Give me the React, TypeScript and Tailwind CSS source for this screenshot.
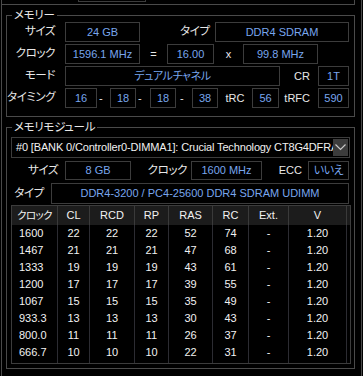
import React from 'react';

const Box: React.FC<{ className: string; children?: React.ReactNode }> = ({ className, children }) => (
  <div className={`flex shrink-0 items-center justify-center border border-[#3c3c3c] text-[#78a6ee] text-[11px] whitespace-nowrap ${className}`}>
    {children}
  </div>
);

const Label: React.FC<{ className: string; children?: React.ReactNode }> = ({ className, children }) => (
  <span className={`shrink-0 whitespace-nowrap text-[#e8e8e8] ${className}`}>{children}</span>
);

const Group: React.FC<{ title: string; className: string; children?: React.ReactNode }> = ({ title, className, children }) => (
  <div className={`relative ml-[4px] w-[349px] border border-[#4a4a4a] ${className}`}>
    <span className="absolute -top-[9px] left-[5px] bg-black px-[2px] text-[11.5px] leading-[16px] tracking-[-0.3px] text-[#e8e8e8]">{title}</span>
    {children}
  </div>
);

const rows = [
  ['1600', '22', '22', '22', '52', '74', '-', '1.20'],
  ['1467', '21', '21', '21', '47', '68', '-', '1.20'],
  ['1333', '19', '19', '19', '43', '61', '-', '1.20'],
  ['1200', '17', '17', '17', '39', '55', '-', '1.20'],
  ['1067', '15', '15', '15', '35', '49', '-', '1.20'],
  ['933.3', '13', '13', '13', '30', '43', '-', '1.20'],
  ['800.0', '11', '11', '11', '26', '37', '-', '1.20'],
  ['666.7', '10', '10', '10', '22', '31', '-', '1.20'],
];

const headers = ['クロック', 'CL', 'RCD', 'RP', 'RAS', 'RC', 'Ext.', 'V'];
const cols = ['w-[46px]', 'w-[32px]', 'w-[45px]', 'w-[34px]', 'w-[44px]', 'w-[36px]', 'w-[40px]', 'w-[58px]'];

const jp = 'text-[11.5px] tracking-[-0.4px]';

export default function App() {
  return (
    <div className="w-[363px] h-[376px] overflow-hidden bg-black font-['Liberation_Sans','Noto_Sans_CJK_JP',sans-serif] [font-feature-settings:'palt'] select-none">
      <div className="ml-[1px] w-[361px] h-[376px] border-x border-[#4a4a4a]">
        {/* bottom of the box above */}
        <div className="w-[353px] h-[5px] border-b border-r border-[#4a4a4a]">
          <div className="ml-[76px] w-[68px] h-[2px] border-x border-b border-[#3c3c3c]" />
        </div>

        <Group title="メモリー" className="mt-[10px] h-[102px] pt-[6px]">
          <div className="flex flex-col gap-[2px] text-[11px]">
            <div className="flex h-[20px] items-center">
              <Label className={`w-[48px] text-right ${jp}`}>サイズ</Label>
              <Box className="ml-[10px] w-[75px] h-[20px]">24 GB</Box>
              <Label className={`ml-[40px] w-[35px] ${jp}`}>タイプ</Label>
              <Box className="w-[134px] h-[20px]">DDR4 SDRAM</Box>
            </div>
            <div className="flex h-[20px] items-center">
              <Label className={`w-[48px] text-right ${jp}`}>クロック</Label>
              <Box className="ml-[10px] w-[75px] h-[20px]">1596.1 MHz</Box>
              <Label className="w-[27px] text-center">=</Label>
              <Box className="w-[47px] h-[20px]">16.00</Box>
              <Label className="w-[29px] text-center">x</Label>
              <Box className="w-[75px] h-[20px]">99.8 MHz</Box>
            </div>
            <div className="flex h-[20px] items-center">
              <Label className={`w-[48px] text-right ${jp}`}>モード</Label>
              <Box className={`ml-[10px] w-[215px] h-[20px] ${jp}`}>デュアルチャネル</Box>
              <Label className="w-[38px] pr-[8px] text-right">CR</Label>
              <Box className="w-[31px] h-[20px]">1T</Box>
            </div>
            <div className="flex h-[20px] items-center">
              <Label className={`w-[48px] text-right ${jp}`}>タイミング</Label>
              <Box className="ml-[10px] w-[32px] h-[20px]">16</Box>
              <Label className="w-[13px] pl-[2px]">-</Label>
              <Box className="w-[26px] h-[20px]">18</Box>
              <Label className="w-[14px] pl-[2px]">-</Label>
              <Box className="w-[26px] h-[20px]">18</Box>
              <Label className="w-[16px] pl-[4px]">-</Label>
              <Box className="w-[26px] h-[20px]">38</Box>
              <Label className="w-[34px] text-center">tRC</Label>
              <Box className="w-[27px] h-[20px]">56</Box>
              <Label className="w-[39px] pr-[8px] text-right">tRFC</Label>
              <Box className="w-[31px] h-[20px]">590</Box>
            </div>
          </div>
        </Group>

        <Group title="メモリモジュール" className="mt-[10px] h-[242px] pt-[9px]">
          <div className="ml-[4px] flex w-[339px] h-[21px] items-center border border-[#3c3c3c]">
            <div className="min-w-0 flex-1 overflow-hidden whitespace-nowrap pl-[4px] text-[11px] tracking-[-0.15px] text-[#f0f0f0]">
              #0 [BANK 0/Controller0-DIMMA1]: Crucial Technology CT8G4DFRA32A.C8FE
            </div>
            <div className="mr-[1px] flex w-[15px] h-[17px] shrink-0 items-center justify-center bg-[#3c3c3c]">
              <svg width="11" height="7" viewBox="0 0 11 7">
                <polyline points="0.5,0.5 5.5,5.5 10.5,0.5" fill="none" stroke="#c8c8c8" strokeWidth="1.2" />
              </svg>
            </div>
          </div>

          <div className="mt-[3px] flex h-[19px] items-center text-[11px]">
            <Label className={`w-[51px] text-right ${jp}`}>サイズ</Label>
            <Box className="ml-[7px] w-[66px] h-[19px]">8 GB</Box>
            <Label className={`w-[60px] pr-[4px] text-right ${jp}`}>クロック</Label>
            <Box className="w-[71px] h-[19px]">1600 MHz</Box>
            <Label className="w-[46px] pr-[6px] text-right">ECC</Label>
            <Box className={`w-[41px] h-[19px] ${jp}`}>いいえ</Box>
          </div>

          <div className="mt-[3px] flex h-[21px] items-center text-[11px]">
            <Label className={`w-[44px] text-center ${jp}`}>タイプ</Label>
            <Box className="w-[298px] h-[21px]">DDR4-3200 / PC4-25600 DDR4 SDRAM UDIMM</Box>
          </div>

          <div className="ml-[4px] mt-[1px] w-[340px] h-[159px] border border-[#3c3c3c] text-[11px] text-[#f2f2f2]">
            <div className="flex h-[19px] bg-[#1c1c1c]">
              {headers.map((h, i) => (
                <div
                  key={h}
                  className={`${cols[i]} flex shrink-0 items-center justify-center whitespace-nowrap border-r border-[#3a3a3a] ${i === 0 ? 'text-[10.5px] tracking-[-0.6px]' : ''}`}
                >
                  {h}
                </div>
              ))}
            </div>
            {rows.map((r) => (
              <div key={r[0]} className="flex h-[17px]">
                {r.map((c, i) => (
                  <div
                    key={i}
                    className={`${cols[i]} flex shrink-0 items-center border-r border-[#2c2c32] ${i === 0 ? 'pl-[7px]' : 'justify-center'}`}
                  >
                    {c}
                  </div>
                ))}
              </div>
            ))}
            <div className="flex h-[2px]">
              {cols.map((c) => (
                <div key={c} className={`${c} shrink-0 border-r border-[#2c2c32]`} />
              ))}
            </div>
          </div>
        </Group>
      </div>
    </div>
  );
}
